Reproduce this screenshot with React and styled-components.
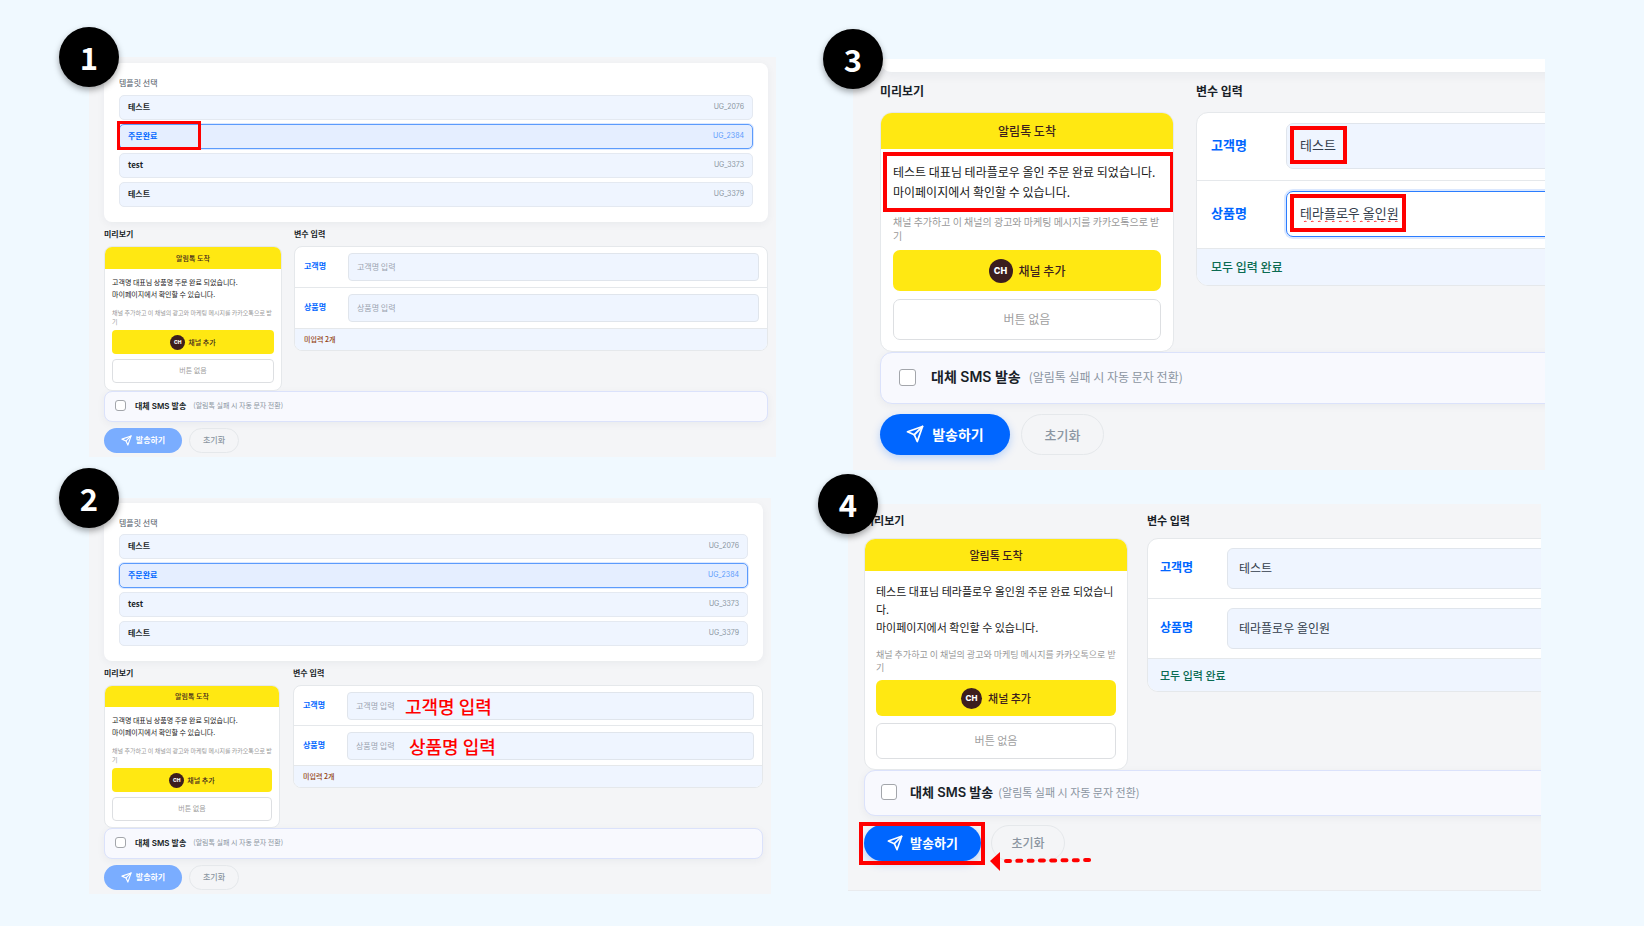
import { useId } from 'react';
import styled, { createGlobalStyle, ThemeProvider } from 'styled-components';
import { FiSend } from 'react-icons/fi';

const GlobalStyle = createGlobalStyle`
    * {
        box-sizing: border-box;
    }

    body {
        margin: 0;
        background: #f0f9ff;
        font-family: "Noto Sans CJK KR", sans-serif;
    }

    button, input {
        font-family: inherit;
    }

    h1, h2, p {
        margin: 0;
    }
`

// one theme per zoom level of the form
const small = {
    xs: 6, sm: 7, md: 8, lg: 8, title: 8,
    pad: '6px 8px 4px 15px', bleed: 0,
    headLine: 24, headGap: 0,
    listGap: 7,
    radius: 8, innerRadius: 4,
    previewWidth: 178, columnGap: 12, previewHeader: 22,
    bodyPad: '7px 7px 7px', messageLine: 12, messageGap: 8, noteLine: 9, noteGap: 4,
    previewButton: 24, previewGap: 5, channelMark: 15, channelText: 5, channelGap: 3,
    fieldPad: '6px 8px 6px 9px', fieldLift: 2, labelWidth: 44, inputHeight: 28, inputPad: 8, status: 21, statusPad: 9,
    smsHeight: 31, smsPad: 10, check: 11, smsGap: 9, smsNoteGap: 7,
    actionTop: 6, actionHeight: 25, sendWidth: 78, resetWidth: 50, actionGap: 7, icon: 11, iconGap: 4,
}

const smallTight = {
    ...small,
    pad: '5px 8px 4px 15px',
    listGap: 6,
    previewWidth: 176, columnGap: 13, previewHeader: 21,
    bodyPad: '7px 7px 6px',
    fieldPad: '6px 8px 5px 9px',
}

const large = {
    xs: 10, sm: 12, md: 13, lg: 14, title: 12,
    pad: '0 0 15px 27px', bleed: 30,
    headLine: 38, headGap: 2,
    radius: 12, innerRadius: 7,
    previewWidth: 294, columnGap: 22, previewHeader: 36,
    bodyPad: '13px 12px 11px', messageLine: 20, messageGap: 13, noteLine: 14, noteGap: 7,
    previewButton: 41, previewGap: 8, channelMark: 24, channelText: 9, channelGap: 6,
    fieldPad: '10px 14px 11px 14px', fieldLift: 3, labelWidth: 75, inputHeight: 46, inputPad: 13, status: 36, statusPad: 14,
    smsHeight: 52, smsPad: 18, check: 17, smsGap: 15, smsNoteGap: 8,
    actionTop: 10, actionHeight: 41, sendWidth: 130, resetWidth: 83, actionGap: 11, icon: 18, iconGap: 8,
}

const medium = {
    xs: 9, sm: 11, md: 12, lg: 13, title: 11,
    pad: '0 0 29px 16px', bleed: 30,
    headLine: 32, headGap: 2,
    radius: 11, innerRadius: 6,
    previewWidth: 264, columnGap: 19, previewHeader: 32,
    bodyPad: '11px 11px 10px', messageLine: 18, messageGap: 12, noteLine: 13, noteGap: 6,
    previewButton: 36, previewGap: 7, channelMark: 21, channelText: 8, channelGap: 6,
    fieldPad: '9px 14px 9px 12px', fieldLift: 3, labelWidth: 67, inputHeight: 41, inputPad: 11, status: 32, statusPad: 12,
    smsHeight: 46, smsPad: 16, check: 16, smsGap: 13, smsNoteGap: 5,
    actionTop: 9, actionHeight: 36, sendWidth: 117, resetWidth: 74, actionGap: 10, icon: 16, iconGap: 7,
}

const Page = styled.main`
    display: grid;
    grid-template-columns: 687fr 697fr;
    column-gap: 72px;
    padding: 57px 99px 32px 89px;
`

const Column = styled.div`
    display: flex;
    flex-direction: column;
    gap: ${props => props.$gap};
    padding-top: ${props => props.$top || '0'};
`

const Step = styled.section`
    position: relative;
    margin: ${props => props.$margin || '0'};
`

const StepNumber = styled.h1`
    position: absolute;
    z-index: 2;
    top: -30px;
    left: -30px;
    width: 60px;
    height: 60px;
    border-radius: 50%;
    background: #000;
    color: #fff;
    font-size: 31px;
    font-weight: 700;
    line-height: 60px;
    text-align: center;
    box-shadow: 0 3px 6px rgba(0, 0, 0, 0.35);
`

const Screen = styled.div`
    overflow: hidden;
    padding: ${props => props.theme.pad};
    background: #f4f5f7;
    border-bottom: ${props => props.$bottomLine ? '1px solid #e9ebee' : 'none'};
`

const ScreenBody = styled.div`
    margin-right: -${props => props.theme.bleed}px;
`

const ListCard = styled.div`
    padding: 15px;
    border-radius: 8px;
    background: #fff;
    box-shadow: 0 2px 8px rgba(20, 30, 60, 0.05);
`

const ListCardEnd = styled.div`
    height: 13px;
    border-radius: 0 0 12px 12px;
    background: #fff;
    box-shadow: 0 3px 12px rgba(20, 30, 60, 0.06);
`

const ListTitle = styled.p`
    margin-bottom: ${props => props.theme.listGap}px;
    color: #4b5563;
    font-size: 8px;
    font-weight: 400;
    line-height: 10px;
`

const TemplateList = styled.div`
    display: flex;
    flex-direction: column;
    gap: 4px;
`

const TemplateItem = styled.button`
    position: relative;
    display: flex;
    align-items: center;
    justify-content: space-between;
    height: 25px;
    padding: 0 8px 2px;
    border: 1px solid ${props => props.$selected ? '#5c9bfc' : '#e4e9f1'};
    border-radius: 5px;
    background: ${props => props.$selected ? '#e5eeff' : '#eff5ff'};
    box-shadow: ${props => props.$selected ? '0 0 0 1px #dbe8ff' : 'none'};
    color: ${props => props.$selected ? '#0066ff' : '#191f28'};
    font-size: 8px;
    font-weight: 700;
    line-height: 12px;
`

const TemplateCode = styled.span`
    color: ${props => props.$selected ? '#5c9bfc' : '#8b95a1'};
    font-family: Inter, sans-serif;
    font-size: 7px;
    font-weight: 400;
`

const Columns = styled.div`
    display: grid;
    grid-template-columns: ${props => props.theme.previewWidth}px minmax(0, 1fr);
    column-gap: ${props => props.theme.columnGap}px;
    align-items: start;
`

const Heading = styled.h2`
    margin-bottom: ${props => props.theme.headGap}px;
    color: #191f28;
    font-size: ${props => props.theme.title}px;
    font-weight: 700;
    line-height: ${props => props.theme.headLine}px;
`

const Card = styled.div`
    overflow: hidden;
    border: 1px solid #e5e8eb;
    border-radius: ${props => props.theme.radius}px;
    background: #fff;
`

const PreviewHeader = styled.p`
    background: #ffe812;
    color: #3c1e1e;
    font-size: ${props => props.theme.sm}px;
    font-weight: 500;
    line-height: ${props => props.theme.previewHeader}px;
    text-align: center;
`

const PreviewBody = styled.div`
    padding: ${props => props.theme.bodyPad};
`

const Message = styled.p`
    position: relative;
    color: #191919;
    font-size: ${props => props.theme.sm}px;
    line-height: ${props => props.theme.messageLine}px;
    white-space: pre-line;
`

const Note = styled.p`
    margin: ${props => props.theme.messageGap}px 0 ${props => props.theme.noteGap}px;
    color: #999;
    font-size: ${props => props.theme.xs}px;
    line-height: ${props => props.theme.noteLine}px;
`

const PreviewButton = styled.button`
    display: flex;
    align-items: center;
    justify-content: center;
    gap: ${props => props.theme.channelGap}px;
    width: 100%;
    height: ${props => props.theme.previewButton}px;
    margin-top: ${props => props.$plain ? props.theme.previewGap : 0}px;
    padding: 0 0 ${props => props.$plain ? 2 : 0}px;
    border: ${props => props.$plain ? '1px solid #dddfe2' : 'none'};
    border-radius: ${props => props.theme.innerRadius}px;
    background: ${props => props.$plain ? '#fff' : '#ffe812'};
    color: ${props => props.$plain ? '#a0a0a0' : '#3c1e1e'};
    font-size: ${props => props.theme.sm}px;
    font-weight: ${props => props.$plain ? 400 : 500};
    line-height: 1;
`

const ChannelMark = styled.span`
    width: ${props => props.theme.channelMark}px;
    height: ${props => props.theme.channelMark}px;
    border-radius: 50%;
    background: #3c1e1e;
    color: #fff;
    font-family: Inter, sans-serif;
    font-size: ${props => props.theme.channelText}px;
    font-weight: 800;
    line-height: ${props => props.theme.channelMark}px;
    text-align: center;
`

const FieldRow = styled.div`
    display: grid;
    grid-template-columns: ${props => props.theme.labelWidth}px minmax(0, 1fr);
    align-items: center;
    padding: ${props => props.theme.fieldPad};
    border-bottom: 1px solid #e5e8eb;
`

const FieldLabel = styled.label`
    padding-bottom: ${props => props.theme.fieldLift}px;
    color: #0066ff;
    font-size: ${props => props.theme.md}px;
    font-weight: 700;
    line-height: 1;
`

const FieldControl = styled.div`
    position: relative;
    display: flex;
`

const FieldInput = styled.input`
    width: 100%;
    height: ${props => props.theme.inputHeight}px;
    padding: 0 ${props => props.theme.inputPad}px ${props => props.theme.fieldLift}px;
    border: 1px solid ${props => props.$active ? '#2b7dff' : '#e0e5ec'};
    border-radius: ${props => props.theme.innerRadius}px;
    outline: none;
    background: ${props => props.$active ? '#fff' : '#eff5ff'};
    box-shadow: ${props => props.$active ? '0 0 0 2px #dbe8ff' : 'none'};
    color: #333d4b;
    font-size: ${props => props.theme.md}px;
    text-decoration: ${props => props.$active ? 'underline wavy #f22 1px' : 'none'};
    text-underline-offset: 2px;
    text-decoration-skip-ink: none;

    &::placeholder {
        color: #9aa3af;
        opacity: 1;
    }
`

const Status = styled.p`
    padding-left: ${props => props.theme.statusPad}px;
    background: #eff5ff;
    color: ${props => props.$done ? '#0b6b52' : '#92400e'};
    font-size: ${props => props.theme.sm}px;
    font-weight: 500;
    line-height: ${props => props.theme.status}px;
`

const SmsBar = styled.div`
    display: flex;
    align-items: center;
    height: ${props => props.theme.smsHeight}px;
    padding: 0 0 2px ${props => props.theme.smsPad}px;
    border: 1px solid #dbe2fb;
    border-radius: ${props => props.theme.radius}px;
    background: #f8f9fe;
    box-shadow: 0 2px 8px rgba(20, 30, 60, 0.05);
`

const SmsCheck = styled.input`
    appearance: none;
    width: ${props => props.theme.check}px;
    height: ${props => props.theme.check}px;
    margin: 0 ${props => props.theme.smsGap}px 0 0;
    border: 1px solid #a3a6ab;
    border-radius: 3px;
    background: #fff;
`

const SmsLabel = styled.label`
    display: flex;
    align-items: center;
    gap: ${props => props.theme.smsNoteGap}px;
    color: #191f28;
    font-family: Inter, "Noto Sans CJK KR", sans-serif;
    font-size: ${props => props.theme.lg}px;
    font-weight: 600;
    line-height: 1;
`

const SmsNote = styled.span`
    color: #8b95a1;
    font-family: "Noto Sans CJK KR", sans-serif;
    font-size: ${props => props.theme.sm}px;
    font-weight: 400;
`

const Actions = styled.div`
    position: relative;
    display: flex;
    gap: ${props => props.theme.actionGap}px;
    margin-top: ${props => props.theme.actionTop}px;
`

const ActionButton = styled.button`
    display: flex;
    align-items: center;
    justify-content: center;
    height: ${props => props.theme.actionHeight}px;
    padding: 0 0 1px;
    border-radius: 50px;
    line-height: 1;
`

const SendButton = styled(ActionButton)`
    gap: ${props => props.theme.iconGap}px;
    width: ${props => props.theme.sendWidth}px;
    border: none;
    background: ${props => props.disabled ? '#7aadff' : '#0066ff'};
    box-shadow: ${props => props.disabled ? 'none' : '0 3px 8px rgba(0, 102, 255, 0.25)'};
    color: #fff;
    font-size: ${props => props.theme.lg}px;
    font-weight: 700;
`

const ResetButton = styled(ActionButton)`
    width: ${props => props.theme.resetWidth}px;
    border: 1px solid #e5e8eb;
    background: transparent;
    color: #8b95a1;
    font-size: ${props => props.theme.md}px;
    font-weight: 500;
`

const Highlight = styled.span`
    position: absolute;
    z-index: 1;
    top: ${props => props.$top}px;
    left: ${props => props.$left}px;
    width: ${props => props.$width}px;
    height: ${props => props.$height}px;
    border: ${props => props.$line || 4}px solid #f00;
    pointer-events: none;
`

const Caption = styled.span`
    position: absolute;
    top: 0;
    left: ${props => props.$left}px;
    color: #f00;
    font-size: 18px;
    font-weight: 500;
    line-height: 28px;
`

const Arrow = styled.svg`
    position: absolute;
    top: 26px;
    left: 126px;
    width: 104px;
    height: 20px;
`

const templates = [
    { name: '테스트', code: 'UG_2076' },
    { name: '주문완료', code: 'UG_2384', selected: true },
    { name: 'test', code: 'UG_3373' },
    { name: '테스트', code: 'UG_3379' },
]

const Templates = ({ marked }) => (
    <ListCard>
        <ListTitle>템플릿 선택</ListTitle>
        <TemplateList>
            {templates.map(({ name, code, selected }) => (
                <TemplateItem key={code} type="button" $selected={selected}>
                    {name}
                    <TemplateCode $selected={selected}>{code}</TemplateCode>
                    {marked && selected && (
                        <Highlight $top={-4} $left={-3} $width={84} $height={29} $line={3} />
                    )}
                </TemplateItem>
            ))}
        </TemplateList>
    </ListCard>
)

const Preview = ({ message, marked }) => (
    <div>
        <Heading>미리보기</Heading>
        <Card>
            <PreviewHeader>알림톡 도착</PreviewHeader>
            <PreviewBody>
                <Message>
                    {message}
                    {marked && <Highlight $top={-10} $left={-10} $width={291} $height={60} />}
                </Message>
                <Note>채널 추가하고 이 채널의 광고와 마케팅 메시지를 카카오톡으로 받기</Note>
                <PreviewButton type="button">
                    <ChannelMark>CH</ChannelMark>
                    채널 추가
                </PreviewButton>
                <PreviewButton type="button" $plain>버튼 없음</PreviewButton>
            </PreviewBody>
        </Card>
    </div>
)

const Field = ({ label, value, caption, mark, active }) => {
    const id = useId();
    return (
        <FieldRow>
            <FieldLabel htmlFor={id}>{label}</FieldLabel>
            <FieldControl>
                <FieldInput
                    id={id}
                    defaultValue={value}
                    placeholder={`${label} 입력`}
                    spellCheck={false}
                    $active={active}
                />
                {caption && <Caption $left={caption}>{label} 입력</Caption>}
                {mark && <Highlight $top={3} $left={4} $width={mark} $height={38} />}
            </FieldControl>
        </FieldRow>
    );
}

const Variables = ({ values = [], captions = [], marks = [], active }) => (
    <div>
        <Heading>변수 입력</Heading>
        <Card>
            {['고객명', '상품명'].map((label, i) => (
                <Field
                    key={label}
                    label={label}
                    value={values[i]}
                    caption={captions[i]}
                    mark={marks[i]}
                    active={active === i}
                />
            ))}
            <Status $done={values.length > 0}>
                {values.length > 0 ? '모두 입력 완료' : '미입력 2개'}
            </Status>
        </Card>
    </div>
)

const Footer = ({ theme, disabled, marked }) => {
    const id = useId();
    return (
        <>
            <SmsBar>
                <SmsCheck type="checkbox" id={id} />
                <SmsLabel htmlFor={id}>
                    대체 SMS 발송
                    <SmsNote>(알림톡 실패 시 자동 문자 전환)</SmsNote>
                </SmsLabel>
            </SmsBar>
            <Actions>
                <SendButton type="button" disabled={disabled}>
                    <FiSend size={theme.icon} strokeWidth={2.4} />
                    발송하기
                </SendButton>
                <ResetButton type="button">초기화</ResetButton>
                {marked && (
                    <>
                        <Highlight $top={-3} $left={-5} $width={126} $height={43} />
                        <Arrow viewBox="0 0 104 20" aria-hidden="true">
                            <path d="M0 10 L10 1 V20 Z" fill="#f00" />
                            <path
                                d="M16 10 L101 9"
                                stroke="#f00"
                                strokeWidth="4"
                                strokeLinecap="round"
                                strokeDasharray="4 7.3"
                            />
                        </Arrow>
                    </>
                )}
            </Actions>
        </>
    );
}

const Guide = ({ number, theme, margin, top, message, variables, markMessage, disabled, markSend }) => (
    <ThemeProvider theme={theme}>
        <Step $margin={margin}>
            <StepNumber>{number}</StepNumber>
            <Screen $bottomLine={markSend}>
                <ScreenBody>
                    {top}
                    <Columns>
                        <Preview message={message} marked={markMessage} />
                        <Variables {...variables} />
                    </Columns>
                    <Footer theme={theme} disabled={disabled} marked={markSend} />
                </ScreenBody>
            </Screen>
        </Step>
    </ThemeProvider>
)

const emptyMessage = '고객명 대표님 상품명 주문 완료 되었습니다.\n마이페이지에서 확인할 수 있습니다.'

export default function App() {
    return (
        <>
            <GlobalStyle />
            <Page>
                <Column $gap="41px">
                    <Guide
                        number={1}
                        theme={small}
                        top={<Templates marked />}
                        message={emptyMessage}
                        disabled
                    />
                    <Guide
                        number={2}
                        theme={smallTight}
                        margin="0 5px 0 0"
                        top={<Templates />}
                        message={emptyMessage}
                        variables={{ captions: [58, 62] }}
                        disabled
                    />
                </Column>
                <Column $gap="34px" $top="2px">
                    <Guide
                        number={3}
                        theme={large}
                        margin="0 0 0 5px"
                        top={<ListCardEnd />}
                        message={'테스트 대표님 테라플로우 올인 주문 완료 되었습니다.\n마이페이지에서 확인할 수 있습니다.'}
                        markMessage
                        variables={{ values: ['테스트', '테라플로우 올인원'], marks: [57, 116], active: 1 }}
                    />
                    <Guide
                        number={4}
                        theme={medium}
                        margin="0 4px 0 0"
                        message={'테스트 대표님 테라플로우 올인원 주문 완료 되었습니다.\n마이페이지에서 확인할 수 있습니다.'}
                        variables={{ values: ['테스트', '테라플로우 올인원'] }}
                        markSend
                    />
                </Column>
            </Page>
        </>
    );
}
